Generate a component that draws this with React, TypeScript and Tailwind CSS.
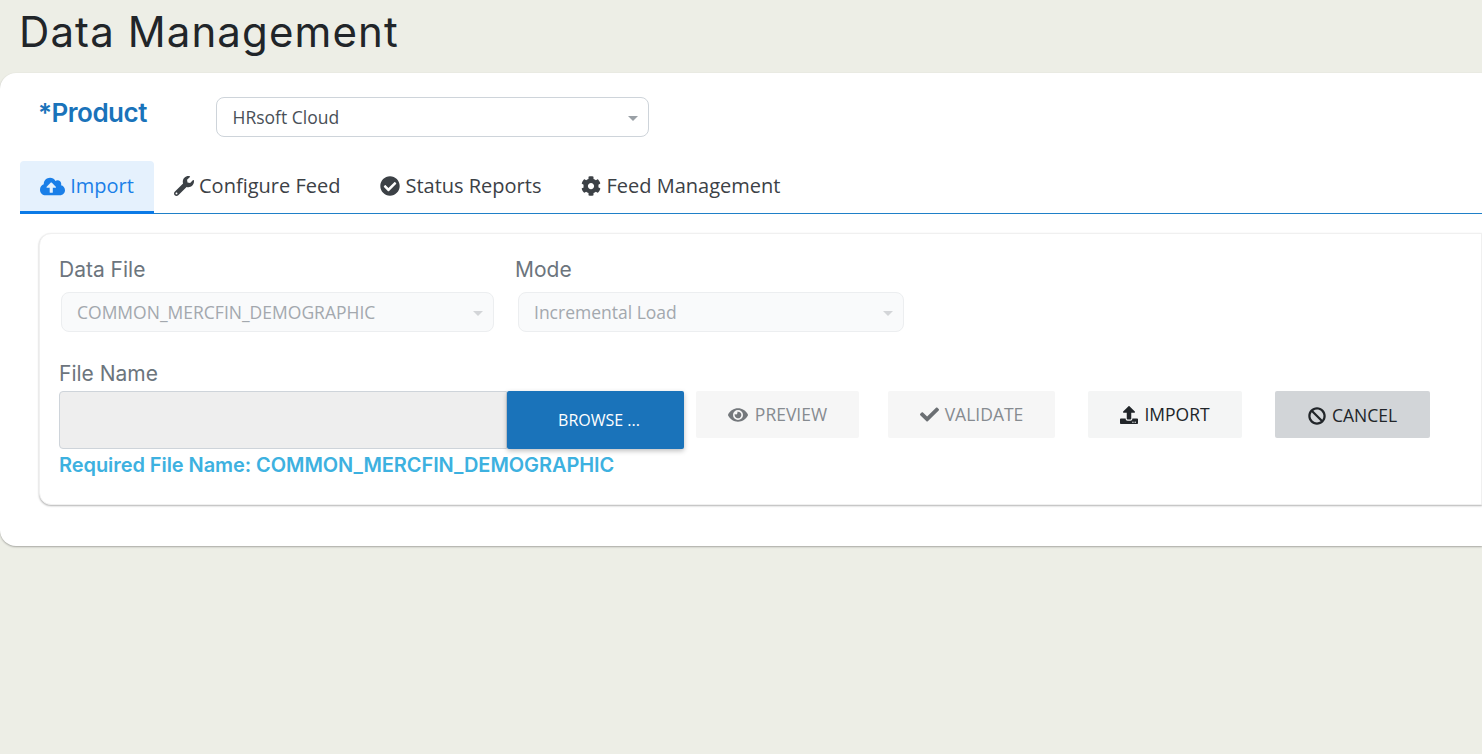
import { FaCloudUploadAlt, FaWrench, FaCheckCircle, FaCog, FaEye, FaCheck, FaUpload, FaBan } from "react-icons/fa";

const body = "font-['Open_Sans',sans-serif]";
const head = "font-['Inter',sans-serif]";

function Caret({ light }: { light?: boolean }) {
  return (
    <span className={`absolute right-[10px] top-[18px] h-0 w-0 border-x-[5px] border-t-[5px] border-x-transparent ${light ? "border-t-[#d3d5d8]" : "border-t-[#9aa0a6]"}`} />
  );
}

export default function App() {
  return (
    <div className={`h-[754px] w-[1482px] overflow-hidden bg-[#edeee6] ${body}`}>
      <div className="h-[73px] pl-[19px] pt-[7px]">
        <h1 className={`${head} text-[42px] leading-[50px] font-normal tracking-[1.1px] text-[#212529]`}>Data Management</h1>
      </div>

      <div className="h-[473px] rounded-l-[16px] bg-white pl-[20px] pt-[24px] shadow-[0_1px_2px_rgba(0,0,0,0.3)]">
        <div className="flex h-[40px]">
          <div className={`${head} w-[196px] pl-[18px] pt-[1px] text-[26px] leading-[30px] font-semibold tracking-[-0.5px] text-[#1a73ba]`}>*Product</div>
          <div className="relative h-[40px] w-[433px] rounded-[8px] border border-[#ced4da] bg-white pl-[15.5px] text-[17.5px] leading-[38px] text-[#495057]">
            HRsoft Cloud
            <Caret />
          </div>
        </div>

        <div className="mt-[24px] flex h-[52px] text-[20px] leading-[50px] text-[#3c4146]">
          <div className="flex h-[53px] w-[134px] items-center justify-center gap-[5px] rounded-t-[4px] border-b-[3px] border-[#0b7ae6] bg-[#e5f1fd] text-[#1a7fe8]">
            <FaCloudUploadAlt className="text-[25px]" />
            <span>Import</span>
          </div>
          <div className="ml-[20px] flex items-center gap-[5px] pb-[3px]">
            <FaWrench className="text-[20px]" />
            <span>Configure Feed</span>
          </div>
          <div className="ml-[40px] flex items-center gap-[5px] pb-[3px]">
            <FaCheckCircle className="text-[20px]" />
            <span>Status Reports</span>
          </div>
          <div className="ml-[40px] flex items-center gap-[5px] pb-[3px]">
            <FaCog className="text-[20px]" />
            <span>Feed Management</span>
          </div>
        </div>
        <div className="h-px bg-[#1f80c8]" />

        <div className="ml-[19px] mt-[19px] h-[272px] rounded-l-[12px] border border-[#f0f0f0] bg-white pl-[19px] pt-[22px] shadow-[0_1px_2px_rgba(0,0,0,0.3)]">
          <div className="flex">
            <div className="w-[456px]">
              <div className={`${head} text-[21px] leading-[28px] text-[#6c757d]`}>Data File</div>
              <div className="relative ml-[2px] mt-[8px] h-[40px] w-[433px] rounded-[8px] border border-[#eceef0] bg-[#f9fafb] pl-[15px] text-[17.5px] leading-[38px] text-[#a3a8ae]">
                COMMON_MERCFIN_DEMOGRAPHIC
                <Caret light />
              </div>
            </div>
            <div>
              <div className={`${head} text-[21px] leading-[28px] text-[#6c757d]`}>Mode</div>
              <div className="relative ml-[3px] mt-[8px] h-[40px] w-[386px] rounded-[8px] border border-[#eceef0] bg-[#f9fafb] pl-[15px] text-[17.5px] leading-[38px] text-[#a3a8ae]">
                Incremental Load
                <Caret light />
              </div>
            </div>
          </div>

          <div className={`${head} mt-[28px] text-[21px] leading-[28px] text-[#6c757d]`}>File Name</div>
          <div className="mt-[3px] flex items-start">
            <div className="h-[58px] w-[448px] rounded-l-[4px] border border-[#ced4da] bg-[#eeeeee]" />
            <div className="flex h-[58px] w-[177px] items-center justify-center rounded-[2px] bg-[#1a73ba] pb-[1px] pl-[7px] text-[16px] text-white shadow-[0_2px_5px_rgba(0,0,0,0.25)]">BROWSE ...</div>
            <div className="ml-[12px] flex h-[47px] w-[163px] items-center justify-center gap-[7px] rounded-[2px] bg-[#f6f6f6] text-[17.5px] text-[#868b90]">
              <FaEye className="text-[20px] text-[#74787c]" />
              <span>PREVIEW</span>
            </div>
            <div className="ml-[29px] flex h-[47px] w-[167px] items-center justify-center gap-[6px] rounded-[2px] bg-[#f6f6f6] text-[17.5px] text-[#868b90]">
              <FaCheck className="text-[19px] text-[#6b6f73]" />
              <span>VALIDATE</span>
            </div>
            <div className="ml-[33px] flex h-[47px] w-[154px] items-center justify-center gap-[6px] rounded-[2px] bg-[#f4f5f5] text-[17.5px] text-[#212529]">
              <FaUpload className="text-[18px]" />
              <span>IMPORT</span>
            </div>
            <div className="ml-[33px] flex h-[47px] w-[155px] items-center justify-center gap-[6px] rounded-[2px] bg-[#d2d5d8] pt-[2px] text-[17.5px] text-[#212529]">
              <FaBan className="text-[18px]" />
              <span>CANCEL</span>
            </div>
          </div>
          <div className={`${head} mt-[1px] text-[20px] leading-[30px] font-semibold tracking-[-0.07px] text-[#3db1e0]`}>Required File Name: COMMON_MERCFIN_DEMOGRAPHIC</div>
        </div>
      </div>
    </div>
  );
}
